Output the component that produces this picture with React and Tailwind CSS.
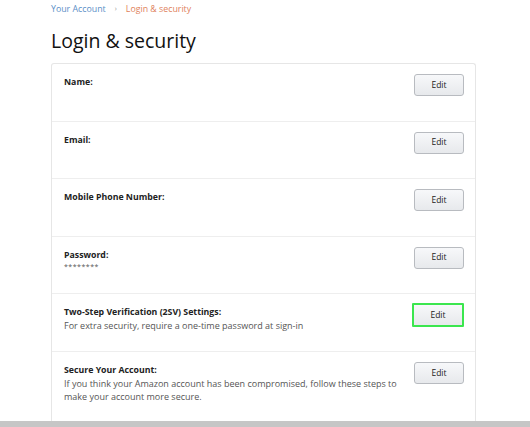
import React from "react";

const rows = [
  { label: "Name:" },
  { label: "Email:" },
  { label: "Mobile Phone Number:" },
  { label: "Password:", lines: ["********"], stars: true },
  {
    label: "Two-Step Verification (2SV) Settings:",
    lines: ["For extra security, require a one-time password at sign-in"],
    highlight: true,
  },
  {
    label: "Secure Your Account:",
    lines: [
      "If you think your Amazon account has been compromised, follow these steps to",
      "make your account more secure.",
    ],
    last: true,
  },
];

function EditButton({ highlight }) {
  if (highlight) {
    return (
      <div className="self-start mt-[9px] border-[2px] border-[#3be64e] rounded-[1px] shrink-0">
        <div className="w-[48px] h-[20px] flex items-center justify-center bg-gradient-to-b from-[#f7f8fa] to-[#e7e9ec] text-[8.5px] text-[#222]">
          Edit
        </div>
      </div>
    );
  }
  return (
    <div className="self-start shrink-0 mt-[10px] w-[50px] h-[22px] flex items-center justify-center rounded-[3px] border border-[#b8bbc0] bg-gradient-to-b from-[#f7f8fa] to-[#e7e9ec] text-[8.5px] text-[#222]">
      Edit
    </div>
  );
}

export default function App() {
  return (
    <div
      className="w-[530px] h-[427px] bg-white flex flex-col overflow-hidden"
      style={{ fontFamily: '"Open Sans", "Noto Sans", sans-serif' }}
    >
      <div className="flex-1 min-h-0 pl-[51px] flex flex-col">
        <div className="pt-[3px] h-[14px] flex items-center gap-[9px] text-[8.8px] leading-[12px]">
          <span className="text-[#5b8fc7]">Your Account</span>
          <span className="text-[#999] text-[7px]">›</span>
          <span className="text-[#e0825c]">Login &amp; security</span>
        </div>
        <h1 className="mt-[14px] text-[19.5px] leading-[26px] text-[#111] font-normal">
          Login &amp; security
        </h1>
        <div className="mt-[9px] w-[425px] flex-1 min-h-0 border border-[#e6e6e6] border-b-0 rounded-t-[3px] flex flex-col">
          {rows.map((r, i) => (
            <div
              key={i}
              className={
                "flex justify-between pl-[12px] pr-[11px] shrink-0 " +
                (r.last ? "flex-1" : "h-[57.6px] border-b border-[#eeeeee]")
              }
            >
              <div className="pt-[12px]">
                <div className="text-[8.75px] leading-[13px] font-bold text-[#222]">
                  {r.label}
                </div>
                {r.lines &&
                  r.lines.map((l, j) => (
                    <div
                      key={j}
                      className={
                        r.stars
                          ? "text-[7px] leading-[10px] text-[#555] tracking-[0.5px]"
                          : "text-[9px] leading-[13px] text-[#555]"
                      }
                    >
                      {l}
                    </div>
                  ))}
              </div>
              <EditButton highlight={r.highlight} />
            </div>
          ))}
        </div>
      </div>
      <div className="h-[6px] bg-[#c6c6c6] shrink-0" />
    </div>
  );
}
